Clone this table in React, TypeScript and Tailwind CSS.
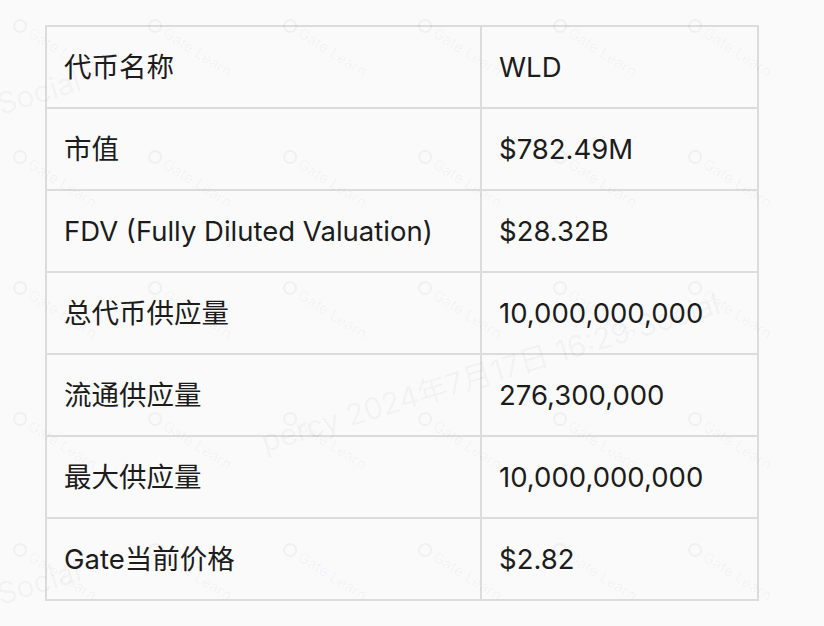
const rows: [string, string][] = [
  ["代币名称", "WLD"],
  ["市值", "$782.49M"],
  ["FDV (Fully Diluted Valuation)", "$28.32B"],
  ["总代币供应量", "10,000,000,000"],
  ["流通供应量", "276,300,000"],
  ["最大供应量", "10,000,000,000"],
  ["Gate当前价格", "$2.82"],
];

const marks: { x: number; y: number }[] = [];
for (let r = 0; r < 5; r++) {
  for (let c = 0; c < 6; c++) {
    marks.push({ x: 20 + c * 135, y: 13 + r * 131 });
  }
}

function Watermark({ x, y }: { x: number; y: number }) {
  return (
    <div
      className="absolute flex items-center gap-1 origin-top-left rotate-[32deg] text-[15px] text-black/[0.04] whitespace-nowrap"
      style={{ left: x, top: y }}
    >
      <span className="w-[14px] h-[14px] rounded-full border-2 border-black/[0.04]" />
      <span>Gate Learn</span>
    </div>
  );
}

export default function App() {
  return (
    <div
      className="relative w-[824px] h-[626px] overflow-hidden bg-[#fafafa] text-[#1c1c1c]"
      style={{ fontFamily: 'Inter, "Noto Sans CJK SC", sans-serif' }}
    >
      <div className="pt-[25px] pl-[45px]">
        <table className="w-[714px] border-collapse border-2 border-[#dcdcdc] text-[27.5px] leading-none">
          <tbody>
            {rows.map(([k, v]) => (
              <tr key={k} className="h-[82px]">
                <td className="w-[435px] border-2 border-[#dcdcdc] pl-[17px] pt-[2px] align-middle">{k}</td>
                <td className="border-2 border-[#dcdcdc] pl-[17px] pt-[2px] align-middle">{v}</td>
              </tr>
            ))}
          </tbody>
        </table>
      </div>

      {/* watermark overlay */}
      <div className="pointer-events-none absolute inset-0">
        {marks.map((m, i) => (
          <Watermark key={i} x={m.x} y={m.y} />
        ))}
        <div className="absolute left-[262px] top-[420px] origin-left -rotate-[17deg] text-[30px] text-black/[0.045] whitespace-nowrap">
          percy 2024年7月17日 16:29 Social
        </div>
        <div className="absolute left-[-4px] top-[70px] -rotate-[17deg] text-[30px] text-black/[0.04]">Social</div>
        <div className="absolute left-[-4px] top-[560px] -rotate-[17deg] text-[30px] text-black/[0.04]">Social</div>
      </div>
    </div>
  );
}
